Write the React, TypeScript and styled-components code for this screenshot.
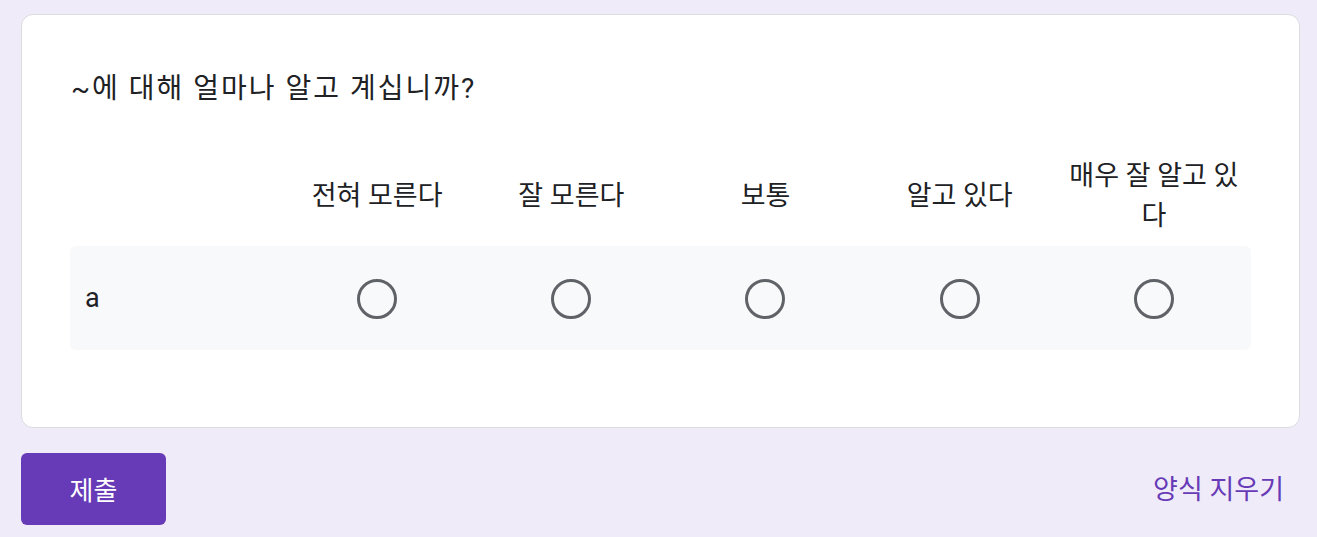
import styled, { createGlobalStyle } from 'styled-components';

const GlobalStyle = createGlobalStyle`
  html, body {
    margin: 0;
    padding: 0;
    background: #f0ebf8;
    font-family: Roboto, "Noto Sans CJK KR", sans-serif;
    color: #202124;
  }
  * {
    box-sizing: border-box;
  }
`;

const Page = styled.div`
  padding: 14px 17px 12px 21px;
`;

const Card = styled.div`
  background: #ffffff;
  border: 1px solid #dadce0;
  border-radius: 12px;
  padding: 58px 48px 77px 48px;
`;

const Title = styled.div`
  font-size: 28px;
  line-height: 32px;
  letter-spacing: 2px;
  margin-bottom: 47px;
  padding-left: 1px;
`;

const Grid = styled.div`
  display: grid;
  grid-template-columns: 210px repeat(5, 1fr);
`;

const HeadCell = styled.div`
  display: flex;
  align-items: center;
  justify-content: center;
  text-align: center;
  font-size: 27px;
  line-height: 40px;
  min-height: 94px;
  padding: 4px 12px 10px;
`;

const Row = styled.div`
  display: contents;
`;

const RowCell = styled.div<{ $first?: boolean; $last?: boolean }>`
  background: #f8f9fa;
  height: 104px;
  display: flex;
  align-items: center;
  justify-content: ${p => (p.$first ? 'flex-start' : 'center')};
  padding-left: ${p => (p.$first ? '15px' : '0')};
  font-size: 27px;
  border-radius: ${p => (p.$first ? '6px 0 0 6px' : p.$last ? '0 6px 6px 0' : '0')};
`;

const Radio = styled.span`
  width: 40px;
  height: 40px;
  border-radius: 50%;
  border: 3px solid #5f6368;
  margin-top: 2px;
`;

const Footer = styled.div`
  display: flex;
  justify-content: space-between;
  align-items: center;
  margin-top: 25px;
`;

const SubmitButton = styled.button`
  width: 145px;
  height: 72px;
  background: #673ab7;
  color: #ffffff;
  border: none;
  border-radius: 6px;
  font-family: Roboto, "Noto Sans CJK KR", sans-serif;
  font-size: 26px;
  padding-bottom: 3px;
  cursor: pointer;
`;

const ClearLink = styled.button`
  background: none;
  border: none;
  color: #673ab7;
  font-family: Roboto, "Noto Sans CJK KR", sans-serif;
  font-size: 27px;
  padding: 0 16px 3px;
  cursor: pointer;
`;

const columns = ['전혀 모른다', '잘 모른다', '보통', '알고 있다', '매우 잘 알고 있다'];

export default function App() {
  return (
    <Page>
      <GlobalStyle />
      <Card>
        <Title>~에 대해 얼마나 알고 계십니까?</Title>
        <Grid>
          <HeadCell />
          {columns.map(c => (
            <HeadCell key={c}>{c}</HeadCell>
          ))}
          <Row>
            <RowCell $first>a</RowCell>
            {columns.map((c, i) => (
              <RowCell key={c} $last={i === columns.length - 1}>
                <Radio />
              </RowCell>
            ))}
          </Row>
        </Grid>
      </Card>
      <Footer>
        <SubmitButton>제출</SubmitButton>
        <ClearLink>양식 지우기</ClearLink>
      </Footer>
    </Page>
  );
}
